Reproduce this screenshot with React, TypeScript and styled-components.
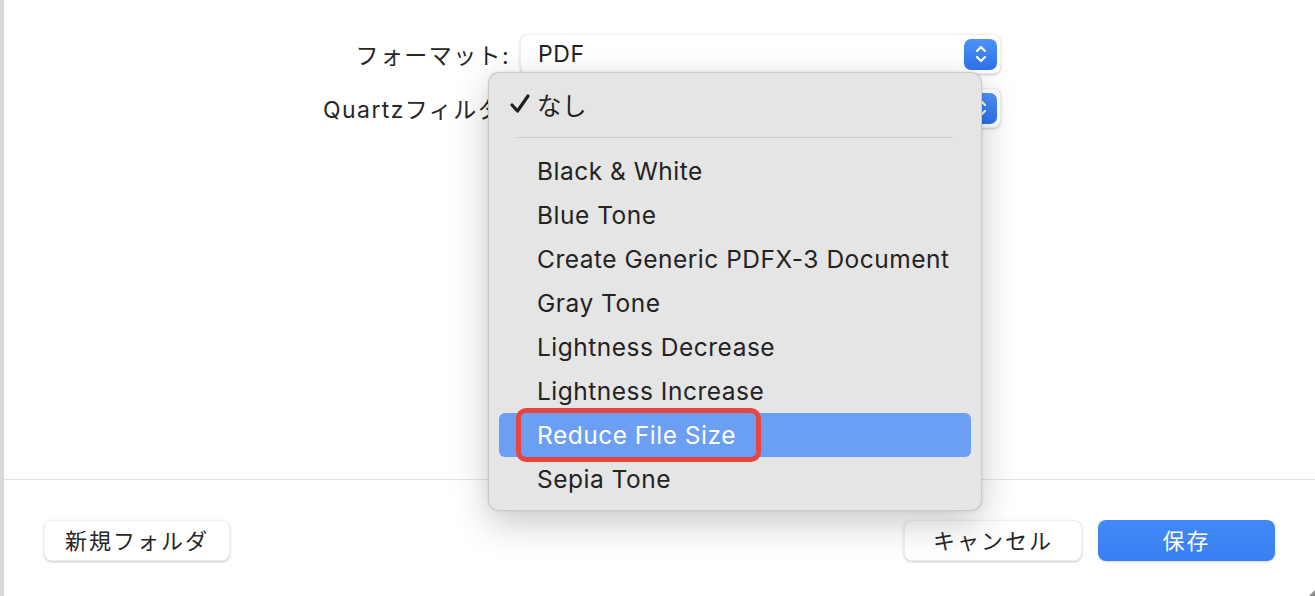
import React from "react";
import styled, { createGlobalStyle } from "styled-components";

const GlobalStyle = createGlobalStyle`
  html, body {
    margin: 0;
    padding: 0;
    background: #ffffff;
  }
  body {
    font-family: "Inter", "Noto Sans CJK JP", sans-serif;
    color: #222222;
    -webkit-font-smoothing: antialiased;
  }
`;

const Window = styled.div`
  position: relative;
  width: 1315px;
  height: 596px;
  box-sizing: border-box;
  border-left: 4px solid #d9d9d9;
  background: #ffffff;
  display: flex;
  flex-direction: column;
  overflow: hidden;
`;

const Body = styled.div`
  height: 480px;
  box-sizing: border-box;
  padding-top: 34px;
  border-bottom: 1px solid #e2e2e2;
`;

const Form = styled.div`
  display: grid;
  grid-template-columns: 506px 481px;
  grid-auto-rows: 40px;
  column-gap: 10px;
  row-gap: 14px;
`;

const Label = styled.div`
  display: flex;
  align-items: center;
  justify-content: flex-end;
  font-size: 23px;
  letter-spacing: 1.4px;
  color: #262626;
`;

const Popup = styled.div`
  display: flex;
  align-items: center;
  justify-content: space-between;
  box-sizing: border-box;
  padding: 0 3px 0 17px;
  background: #ffffff;
  border-radius: 8px;
  border: 1px solid rgba(0, 0, 0, 0.06);
  box-shadow: 0 1px 2.5px rgba(0, 0, 0, 0.22);
  font-size: 23px;
  letter-spacing: 0.6px;
  color: #222222;
`;

const Stepper = styled.div`
  width: 33px;
  height: 31px;
  border-radius: 7px;
  background: linear-gradient(#4c92f8, #2e73ea);
  display: flex;
  align-items: center;
  justify-content: center;
`;

const Footer = styled.div`
  flex: 1;
  display: flex;
  align-items: flex-start;
  justify-content: space-between;
  padding: 40px 40px 0 40px;
`;

const ButtonGroup = styled.div`
  display: flex;
  gap: 16px;
`;

const Button = styled.button<{ $primary?: boolean; $width: number }>`
  width: ${({ $width }) => $width}px;
  height: 41px;
  padding: 0 0 4px;
  border-radius: 8px;
  font-family: inherit;
  font-size: 22px;
  letter-spacing: 2px;
  cursor: pointer;
  border: ${({ $primary }) => ($primary ? "none" : "1px solid rgba(0, 0, 0, 0.06)")};
  background: ${({ $primary }) =>
    $primary ? "linear-gradient(#4189f7, #3a7ff3)" : "#ffffff"};
  color: ${({ $primary }) => ($primary ? "#ffffff" : "#262626")};
  box-shadow: ${({ $primary }) =>
    $primary ? "0 1px 2px rgba(0, 0, 0, 0.15)" : "0 1px 2.5px rgba(0, 0, 0, 0.22)"};
`;

const Menu = styled.div`
  position: absolute;
  left: 484px;
  top: 72px;
  width: 494px;
  height: 439px;
  box-sizing: border-box;
  padding: 9px 10px 11px;
  background: #e5e5e5;
  border: 1px solid rgba(0, 0, 0, 0.12);
  border-radius: 11px;
  box-shadow: 0 12px 36px rgba(0, 0, 0, 0.22), 0 0 3px rgba(0, 0, 0, 0.1);
`;

const Item = styled.div<{ $active?: boolean }>`
  position: relative;
  height: 44px;
  display: flex;
  align-items: center;
  padding-left: 38px;
  border-radius: 6px;
  font-size: 24.5px;
  letter-spacing: 0.5px;
  color: ${({ $active }) => ($active ? "#ffffff" : "#232323")};
  background: ${({ $active }) => ($active ? "#6a9ff4" : "transparent")};
`;

const Check = styled.span`
  position: absolute;
  left: 10px;
  top: 11px;
  display: flex;
`;

const Separator = styled.div`
  height: 1px;
  margin: 11px 18px 11px 18px;
  background: #cbcbcb;
`;

const Highlight = styled.div`
  position: absolute;
  left: 17px;
  top: -5px;
  width: 245px;
  height: 54px;
  box-sizing: border-box;
  border: 5px solid #e8453f;
  border-radius: 10px;
`;

const Grip = styled.div`
  position: absolute;
  right: 0;
  bottom: 0;
  width: 0;
  height: 0;
  border-style: solid;
  border-width: 0 0 6px 6px;
  border-color: transparent transparent #8a8a8a transparent;
`;

const StepperIcon = () => (
  <svg width="14" height="22" viewBox="0 0 14 22" fill="none">
    <path d="M3 8 L7 4 L11 8" stroke="#fff" strokeWidth="2.2" strokeLinecap="round" strokeLinejoin="round" />
    <path d="M3 14 L7 18 L11 14" stroke="#fff" strokeWidth="2.2" strokeLinecap="round" strokeLinejoin="round" />
  </svg>
);

const CheckIcon = () => (
  <svg width="22" height="22" viewBox="0 0 22 22" fill="none">
    <path d="M3 12 L8.5 18 L19 3" stroke="#1e1e1e" strokeWidth="3.2" strokeLinecap="round" strokeLinejoin="round" />
  </svg>
);

const filters = [
  "Black & White",
  "Blue Tone",
  "Create Generic PDFX-3 Document",
  "Gray Tone",
  "Lightness Decrease",
  "Lightness Increase",
  "Reduce File Size",
  "Sepia Tone",
];

export default function App() {
  return (
    <>
      <GlobalStyle />
      <Window>
        <Body>
          <Form>
            <Label>フォーマット:</Label>
            <Popup>
              <span>PDF</span>
              <Stepper>
                <StepperIcon />
              </Stepper>
            </Popup>
            <Label>Quartzフィルタ:</Label>
            <Popup>
              <span />
              <Stepper>
                <StepperIcon />
              </Stepper>
            </Popup>
          </Form>
        </Body>
        <Footer>
          <Button $width={186}>新規フォルダ</Button>
          <ButtonGroup>
            <Button $width={178}>キャンセル</Button>
            <Button $width={177} $primary>
              保存
            </Button>
          </ButtonGroup>
        </Footer>
        <Menu>
          <Item>
            <Check>
              <CheckIcon />
            </Check>
            なし
          </Item>
          <Separator />
          {filters.map((name) => (
            <Item key={name} $active={name === "Reduce File Size"}>
              {name === "Reduce File Size" && <Highlight />}
              {name}
            </Item>
          ))}
        </Menu>
        <Grip />
      </Window>
    </>
  );
}
